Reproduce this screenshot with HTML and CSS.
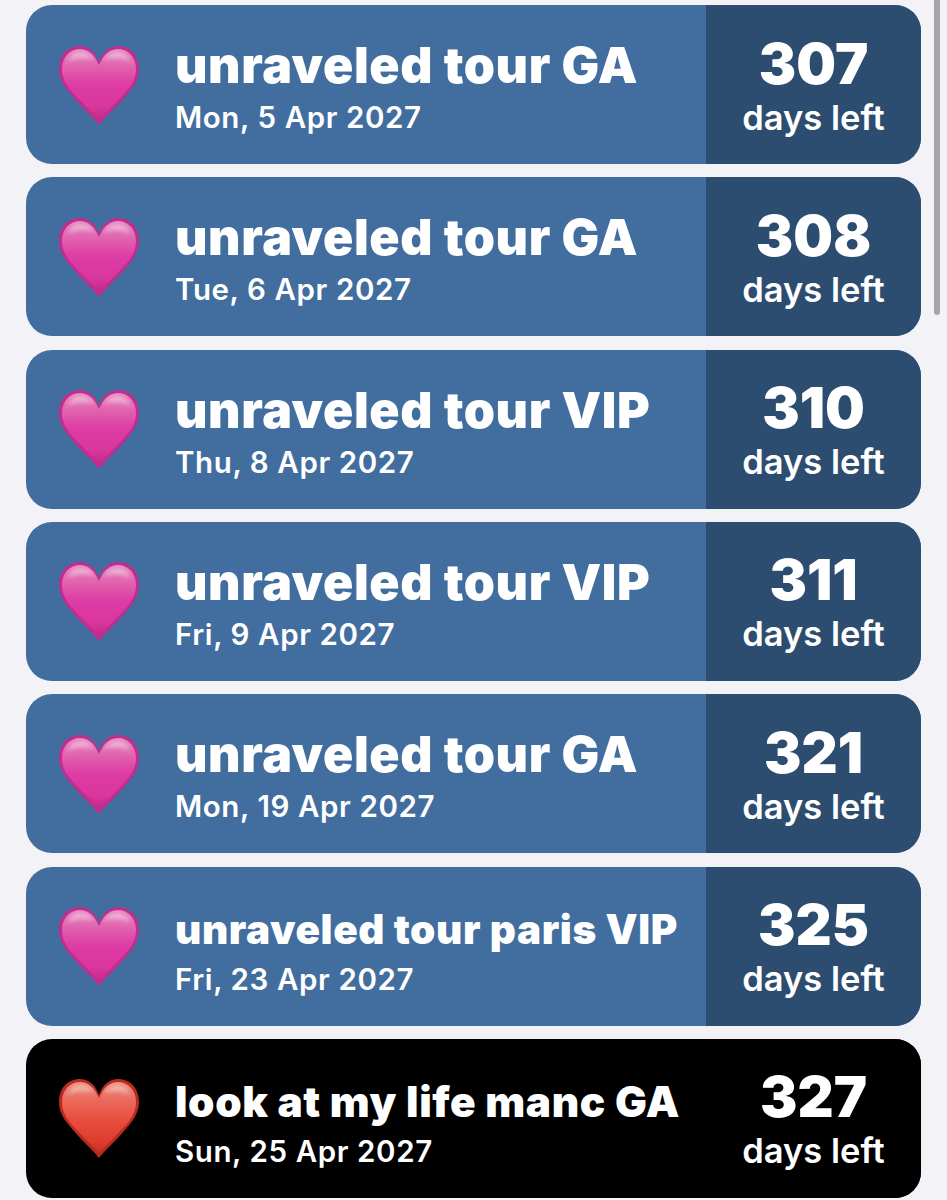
FILE: index.html
```html
<!DOCTYPE html>
<html lang="en">
<head>
<meta charset="utf-8">
<title>Countdowns</title>
<link rel="stylesheet" href="styles.css">
</head>
<body>
<svg class="defs" width="0" height="0" aria-hidden="true">
  <defs>
    <linearGradient id="pinkFill" x1="0" y1="0" x2="0" y2="1">
      <stop offset="0" stop-color="#e487bd"/>
      <stop offset=".3" stop-color="#e05bab"/>
      <stop offset=".5" stop-color="#de3ca6"/>
      <stop offset=".8" stop-color="#d9379c"/>
      <stop offset="1" stop-color="#c42a88"/>
    </linearGradient>
    <linearGradient id="redFill" x1="0" y1="0" x2="0" y2="1">
      <stop offset="0" stop-color="#ec8a7e"/>
      <stop offset=".3" stop-color="#e96557"/>
      <stop offset=".55" stop-color="#e84d3e"/>
      <stop offset=".85" stop-color="#dc3c2e"/>
      <stop offset="1" stop-color="#c42f22"/>
    </linearGradient>
    <filter id="soft" x="-20%" y="-20%" width="140%" height="140%">
      <feGaussianBlur stdDeviation="2"/>
    </filter>
    <symbol id="heartPink" viewBox="0 0 80 80">
      <path fill="#c12c90" d="M40 80C34 72 24 64 14 52 5 42 0 34 0 24 0 10 9 1 21 1 29 1 36 6 40 17 44 6 51 1 59 1 71 1 80 10 80 24 80 34 75 42 66 52 56 64 46 72 40 80Z"/>
      <path fill="url(#pinkFill)" d="M40 75C34 68 26 61 16 50 7 41 3 33 3 24 3 12 11 4 21 4 29 4 35 9 40 20 45 9 51 4 59 4 69 4 77 12 77 24 77 33 73 41 64 50 54 61 46 68 40 75Z"/>
      <path fill="#fff" opacity=".42" filter="url(#soft)" d="M9 17C11 10 16 7 22 7 28 7 33 11 35 15 28 12 16 12 9 17ZM45 15C47 11 52 7 58 7 64 7 69 10 71 17 64 12 52 12 45 15Z"/>
    </symbol>
    <symbol id="heartRed" viewBox="0 0 80 80">
      <path fill="#b92b20" d="M40 80C34 72 24 64 14 52 5 42 0 34 0 24 0 10 9 1 21 1 29 1 36 6 40 17 44 6 51 1 59 1 71 1 80 10 80 24 80 34 75 42 66 52 56 64 46 72 40 80Z"/>
      <path fill="url(#redFill)" d="M40 75C34 68 26 61 16 50 7 41 3 33 3 24 3 12 11 4 21 4 29 4 35 9 40 20 45 9 51 4 59 4 69 4 77 12 77 24 77 33 73 41 64 50 54 61 46 68 40 75Z"/>
      <path fill="#fff" opacity=".42" filter="url(#soft)" d="M9 17C11 10 16 7 22 7 28 7 33 11 35 15 28 12 16 12 9 17ZM45 15C47 11 52 7 58 7 64 7 69 10 71 17 64 12 52 12 45 15Z"/>
    </symbol>
  </defs>
</svg>
<div class="scrollbar"></div>
<main class="list">
  <article class="card">
    <svg class="heart"><use href="#heartPink"/></svg>
    <div class="info"><h2 class="title">unraveled tour GA</h2><p class="date">Mon, 5 Apr 2027</p></div>
    <div class="count"><span class="num">307</span><span class="left">days left</span></div>
  </article>
  <article class="card">
    <svg class="heart"><use href="#heartPink"/></svg>
    <div class="info"><h2 class="title">unraveled tour GA</h2><p class="date">Tue, 6 Apr 2027</p></div>
    <div class="count"><span class="num">308</span><span class="left">days left</span></div>
  </article>
  <article class="card">
    <svg class="heart"><use href="#heartPink"/></svg>
    <div class="info"><h2 class="title">unraveled tour VIP</h2><p class="date">Thu, 8 Apr 2027</p></div>
    <div class="count"><span class="num">310</span><span class="left">days left</span></div>
  </article>
  <article class="card">
    <svg class="heart"><use href="#heartPink"/></svg>
    <div class="info"><h2 class="title">unraveled tour VIP</h2><p class="date">Fri, 9 Apr 2027</p></div>
    <div class="count"><span class="num">311</span><span class="left">days left</span></div>
  </article>
  <article class="card">
    <svg class="heart"><use href="#heartPink"/></svg>
    <div class="info"><h2 class="title">unraveled tour GA</h2><p class="date">Mon, 19 Apr 2027</p></div>
    <div class="count"><span class="num">321</span><span class="left">days left</span></div>
  </article>
  <article class="card">
    <svg class="heart"><use href="#heartPink"/></svg>
    <div class="info"><h2 class="title title-small">unraveled tour paris VIP</h2><p class="date">Fri, 23 Apr 2027</p></div>
    <div class="count"><span class="num">325</span><span class="left">days left</span></div>
  </article>
  <article class="card card-black">
    <svg class="heart"><use href="#heartRed"/></svg>
    <div class="info"><h2 class="title title-mid">look at my life manc GA</h2><p class="date">Sun, 25 Apr 2027</p></div>
    <div class="count"><span class="num">327</span><span class="left">days left</span></div>
  </article>
</main>
</body>
</html>
```
FILE: styles.css
```css
html, body {
  margin: 0;
  height: 1200px;
  overflow: hidden;
  background: #f2f2f7;
  font-family: Inter, "Liberation Sans", sans-serif;
  color: #fff;
}
.defs { position: absolute; }
.scrollbar {
  position: absolute;
  top: 0;
  left: 934px;
  width: 6px;
  height: 315px;
  border-radius: 0 0 3px 3px;
  background: #a5a5aa;
}
.list {
  display: flex;
  flex-direction: column;
  gap: 13.33px;
  padding: 5px 26px 0;
}
.card {
  display: flex;
  align-items: stretch;
  height: 159px;
  flex: none;
  border-radius: 26px;
  overflow: hidden;
  background: #426e9f;
}
.card-black { background: #000; }
.heart {
  flex: none;
  align-self: center;
  width: 80px;
  height: 80px;
  margin-left: 33px;
}
.info {
  flex: 1;
  display: flex;
  flex-direction: column;
  justify-content: center;
  gap: 8px;
  margin-left: 36px;
  padding-top: 5px;
  min-width: 0;
}
.title {
  margin: 0;
  font-size: 50px;
  line-height: 52px;
  font-weight: 900;
  letter-spacing: 0.6px;
  white-space: nowrap;
}
.title-small { font-size: 40.5px; margin: 4px 0 -3px; }
.title-mid { font-size: 42.3px; margin: 4px 0 -3px; }
.date {
  margin: 0;
  font-size: 29.5px;
  line-height: 36px;
  font-weight: 600;
  letter-spacing: 0.6px;
}
.count {
  flex: none;
  width: 215px;
  display: flex;
  flex-direction: column;
  align-items: center;
  justify-content: center;
  gap: 4px;
  padding-top: 2px;
  background: #2d4d70;
}
.card-black .count { background: #000; }
.num {
  font-size: 56px;
  line-height: 60px;
  font-weight: 900;
}
.left {
  font-size: 34.5px;
  line-height: 40px;
  font-weight: 600;
}
```
